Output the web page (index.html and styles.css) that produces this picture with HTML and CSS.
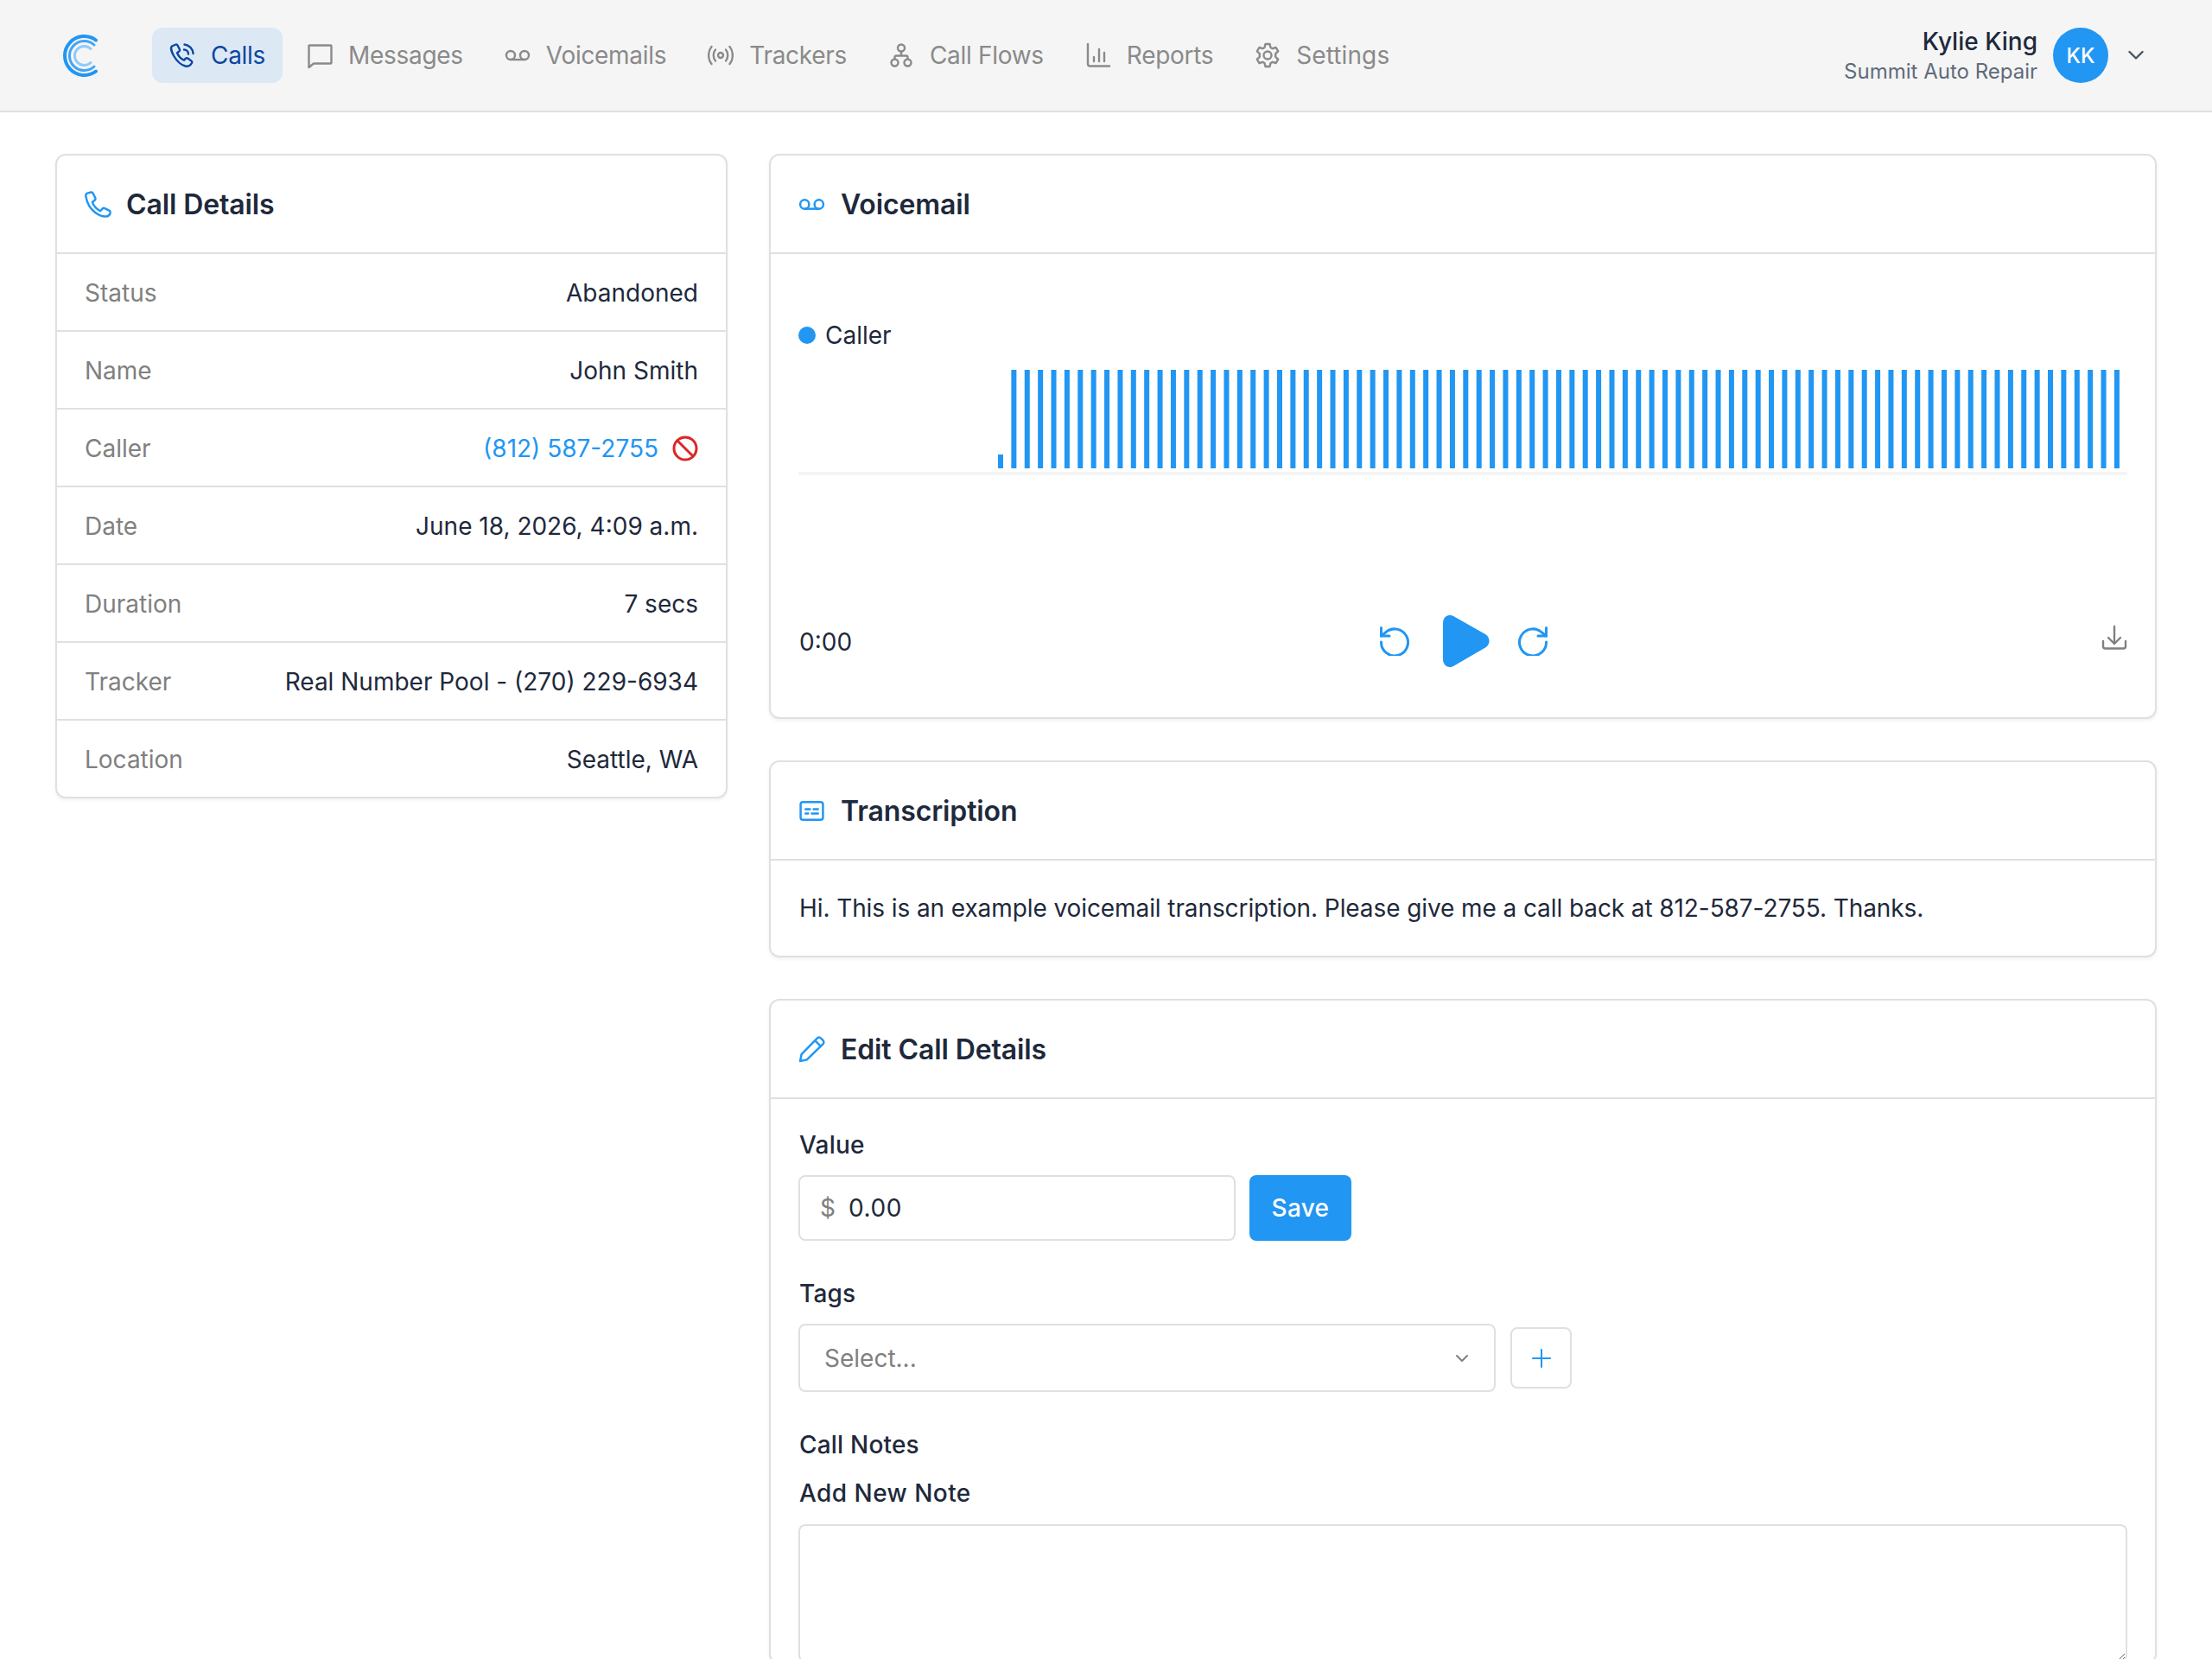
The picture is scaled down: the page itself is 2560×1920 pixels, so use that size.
FILE: index.html
```html
<!DOCTYPE html>
<html lang="en">
<head>
    <meta charset="UTF-8">
    <meta name="viewport" content="width=device-width, initial-scale=1.0">
    <title>Call Details</title>

    <link rel="stylesheet" href="styles.css">
</head>
<body>
    <header class="topbar">
        <svg class="logo" viewBox="0 0 40 49" fill="none" stroke-linecap="round">
            <path d="M38 6.500A22.500 22.500 0 1 0 38 42.500" stroke="#2196f3" stroke-width="4"/>
            <path d="M36 12A17 17 0 1 0 36 37" stroke="#42a5f5" stroke-width="3"/>
            <path d="M32 16.500A11 11 0 1 0 32 32.500" stroke="#90caf9" stroke-width="3"/>
        </svg>
        <nav class="nav">
            <a class="nav__item nav__item--active">
                <svg class="nav__icon" viewBox="0 0 30 30" fill="none" stroke="currentColor" stroke-width="2.4" stroke-linecap="round" stroke-linejoin="round">
                    <path d="M7.500 2.500 3 4.500C1.500 5.500 2 10 5 15.500c3.500 6 8 10.500 13.500 12 3 .8 6-1 7.500-3.500.5-1 .2-2-.6-2.600l-4-2.800c-1-.6-2-.5-2.800.3l-1.600 1.800c-3.500-1.500-6.500-5-8-8.500l2.200-1.700c.8-.7 1-1.700.5-2.700L9.500 3.500c-.5-1-1.200-1.300-2-1z"/>
                    <path d="M17 8.500a5 5 0 0 1 5 5"/>
                    <path d="M17.500 2.500a11 11 0 0 1 10 10.500"/>
                </svg>
                <span>Calls</span>
            </a>
            <a class="nav__item">
                <svg class="nav__icon" viewBox="0 0 30 30" fill="none" stroke="currentColor" stroke-width="2.4" stroke-linejoin="round">
                    <path d="M3 3.500h24.500c.5 0 1 .5 1 1v19c0 .5-.5 1-1 1H8l-5.500 4.500V4c0-.3.2-.5.5-.5z"/>
                </svg>
                <span>Messages</span>
            </a>
            <a class="nav__item">
                <svg class="nav__icon" viewBox="0 0 30 30" fill="none" stroke="currentColor" stroke-width="2.4">
                    <circle cx="7" cy="15" r="5"/>
                    <circle cx="23" cy="15" r="5"/>
                    <path d="M7 20h16"/>
                </svg>
                <span>Voicemails</span>
            </a>
            <a class="nav__item">
                <svg class="nav__icon" viewBox="0 0 30 30" fill="none" stroke="currentColor" stroke-width="2.4" stroke-linecap="round">
                    <circle cx="15" cy="15" r="3"/>
                    <path d="M9 8.500c-3 3.500-3 9.500 0 13"/>
                    <path d="M21 8.500c3 3.500 3 9.500 0 13"/>
                    <path d="M4.500 5c-4.500 5.500-4.500 14.500 0 20"/>
                    <path d="M25.500 5c4.500 5.500 4.500 14.500 0 20"/>
                </svg>
                <span>Trackers</span>
            </a>
            <a class="nav__item">
                <svg class="nav__icon" viewBox="0 0 30 30" fill="none" stroke="currentColor" stroke-width="2.4">
                    <circle cx="15" cy="6.500" r="4"/>
                    <circle cx="7.500" cy="23.500" r="4"/>
                    <circle cx="22.500" cy="23.500" r="4"/>
                    <path d="M15 10.500v5M7.500 19.500v-2c0-1 .8-2 2-2h11c1.200 0 2 1 2 2v2"/>
                </svg>
                <span>Call Flows</span>
            </a>
            <a class="nav__item">
                <svg class="nav__icon" viewBox="0 0 30 30" fill="none" stroke="currentColor" stroke-width="2.4" stroke-linecap="round">
                    <path d="M3 2v23c0 1.500.8 2.500 2.500 2.500H28"/>
                    <path d="M10 17v5M16 8v14M22 12v10"/>
                </svg>
                <span>Reports</span>
            </a>
            <a class="nav__item">
                <svg class="nav__icon" viewBox="0 0 30 30" fill="none" stroke="currentColor" stroke-width="2.4" stroke-linejoin="round">
                    <circle cx="15" cy="15" r="4.500"/>
                    <path d="M12.500 2h5l1 4 2.200 1.200 4-1.200 2.500 4.300-3 2.900v3.600l3 2.900-2.500 4.300-4-1.200-2.200 1.200-1 4h-5l-1-4-2.200-1.200-4 1.200-2.500-4.300 3-2.900v-3.600l-3-2.900L5.300 6l4 1.200 2.200-1.200z"/>
                </svg>
                <span class="nav__text--wide">Settings</span>
            </a>
        </nav>
        <div class="account">
            <div class="account__text">
                <div class="account__name">Kylie King</div>
                <div class="account__org">Summit Auto Repair</div>
            </div>
            <div class="avatar">KK</div>
            <svg class="account__chevron" viewBox="0 0 18 12" fill="none" stroke="currentColor" stroke-width="2.4" stroke-linecap="round" stroke-linejoin="round">
                <path d="M1.500 2 9 9.500 16.500 2"/>
            </svg>
        </div>
    </header>

    <main class="page">
        <section class="card card--details">
            <div class="card__header">
                <svg class="card__icon" viewBox="0 0 30 30" fill="none" stroke="currentColor" stroke-width="2.4" stroke-linejoin="round">
                    <path d="M7 1.500 3 2.500C1.500 3 1 4.500 1.500 7c1.500 7.500 5 13 10 17 4 3 9 5 13 4.500 2-.3 3.500-1.500 4-3.500.3-1.500 0-2.500-1-3l-5-2.500c-1-.5-2-.3-2.700.5l-2.300 2.500c-4-2-7.500-6-9-10l2.700-2c.8-.7 1-1.700.7-2.700L9.500 3C9 1.800 8.200 1.200 7 1.500z"/>
                </svg>
                <h2>Call Details</h2>
            </div>
            <div class="row"><span class="row__label">Status</span><span>Abandoned</span></div>
            <div class="row"><span class="row__label">Name</span><span>John Smith</span></div>
            <div class="row">
                <span class="row__label">Caller</span>
                <span class="row__caller">
                    <a class="link">(812) 587-2755</a>
                    <svg class="block-icon" viewBox="0 0 30 30" fill="none" stroke="#dc2626" stroke-width="3">
                        <circle cx="15" cy="15" r="13"/>
                        <path d="M6 6l18 18"/>
                    </svg>
                </span>
            </div>
            <div class="row"><span class="row__label">Date</span><span>June 18, 2026, 4:09 a.m.</span></div>
            <div class="row"><span class="row__label">Duration</span><span>7 secs</span></div>
            <div class="row"><span class="row__label">Tracker</span><span>Real Number Pool - (270) 229-6934</span></div>
            <div class="row"><span class="row__label">Location</span><span>Seattle, WA</span></div>
        </section>

        <div class="stack">
            <section class="card">
                <div class="card__header">
                    <svg class="card__icon" viewBox="0 0 30 30" fill="none" stroke="currentColor" stroke-width="2.4">
                        <circle cx="7" cy="15" r="5"/>
                        <circle cx="23" cy="15" r="5"/>
                        <path d="M7 20h16"/>
                    </svg>
                    <h2>Voicemail</h2>
                </div>
                <div class="player">
                    <div class="legend"><i class="legend__dot"></i>Caller</div>
                    <svg class="wave" id="wave" width="1538" height="126" viewBox="0 0 1538 126"></svg>
                    <div class="player__controls">
                        <span class="player__time">0:00</span>
                        <div class="player__buttons">
                            <svg class="skip" viewBox="0 0 34 34" fill="none" stroke="currentColor" stroke-width="3" stroke-linecap="round" stroke-linejoin="round">
                                <path d="M1.500 18a15.500 15.500 0 1 0 5-11L1.500 11"/>
                                <path d="M1.500 1.500V11H11"/>
                            </svg>
                            <svg class="play" viewBox="0 0 54 60" fill="currentColor">
                                <path d="M0 9C0 2 6-2 12 1l37 21c6 3.500 6 12 0 15.500L12 59C6 62 0 58 0 51z"/>
                            </svg>
                            <svg class="skip" viewBox="0 0 34 34" fill="none" stroke="currentColor" stroke-width="3" stroke-linecap="round" stroke-linejoin="round">
                                <path d="M32.500 18a15.500 15.500 0 1 1-5-11L32.500 11"/>
                                <path d="M32.500 1.500V11H23"/>
                            </svg>
                        </div>
                        <svg class="download" viewBox="0 0 30 30" fill="none" stroke="currentColor" stroke-width="2.4" stroke-linecap="round" stroke-linejoin="round">
                            <path d="M15 2v20M8 15l7 7 7-7"/>
                            <path d="M2 19v6c0 1.500 1 2.500 2.500 2.500h21c1.500 0 2.500-1 2.500-2.500v-6"/>
                        </svg>
                    </div>
                </div>
            </section>

            <section class="card">
                <div class="card__header">
                    <svg class="card__icon" viewBox="0 0 30 30" fill="none" stroke="currentColor" stroke-width="2.4" stroke-linecap="round">
                        <rect x="2.500" y="5" width="25" height="20" rx="2.500"/>
                        <path d="M8 13h5M17 13h5M8 18h3M15 18h7"/>
                    </svg>
                    <h2>Transcription</h2>
                </div>
                <p class="transcript">Hi. This is an example voicemail transcription. Please give me a call back at 812-587-2755. Thanks.</p>
            </section>

            <section class="card">
                <div class="card__header">
                    <svg class="card__icon" viewBox="0 0 30 30" fill="none" stroke="currentColor" stroke-width="2.4" stroke-linejoin="round">
                        <path d="M2 28l1.500-7.500L21 2.500c1.200-1.200 3-1.200 4.200 0l2.300 2.300c1.200 1.200 1.200 3 0 4.200L9.500 26.500z"/>
                        <path d="M18.500 5l6.500 6.500"/>
                    </svg>
                    <h2>Edit Call Details</h2>
                </div>
                <form class="edit">
                    <label class="edit__label">Value</label>
                    <div class="edit__value">
                        <div class="money"><span class="money__sign">$</span><input class="money__input" type="text" value="0.00"></div>
                        <button class="btn" type="button">Save</button>
                    </div>
                    <label class="edit__label">Tags</label>
                    <div class="edit__tags">
                        <div class="select">
                            <span>Select...</span>
                            <svg class="select__chevron" viewBox="0 0 16 10" fill="none" stroke="currentColor" stroke-width="2" stroke-linecap="round" stroke-linejoin="round">
                                <path d="M2 2l6 6 6-6"/>
                            </svg>
                        </div>
                        <button class="btn-add" type="button">
                            <svg viewBox="0 0 22 22" fill="none" stroke="currentColor" stroke-width="2" stroke-linecap="round">
                                <path d="M11 1v20M1 11h20"/>
                            </svg>
                        </button>
                    </div>
                    <div class="edit__label edit__label--notes">Call Notes</div>
                    <label class="edit__label edit__label--new">Add New Note</label>
                    <textarea class="edit__note"></textarea>
                </form>
            </section>
        </div>
    </main>

    <script src="wave.js"></script>
</body>
</html>
```

FILE: styles.css
```css
* {
    margin: 0;
    padding: 0;
    box-sizing: border-box;
}

html, body {
    height: 1920px;
    overflow: hidden;
}

body {
    background-color: #fff;
    color: #1e293b;
    font-family: 'Inter', sans-serif;
    font-size: 28px;
}

.topbar {
    display: flex;
    align-items: center;
    height: 130px;
    padding: 0 64px 0 73px;
    background-color: #f5f5f5;
    border-bottom: 2px solid #e0e0e0;
}

.logo {
    width: 40px;
    height: 49px;
    margin-right: 63px;
}

.nav {
    display: flex;
    gap: 8px;
    letter-spacing: -0.3px;
}

.nav__item {
    display: flex;
    align-items: center;
    gap: 18px;
    height: 64px;
    padding: 0 20px;
    border-radius: 12px;
    color: #8a8a8a;
}

.nav__item--active {
    background-color: #dce9f5;
    color: #0d47a1;
}

.nav__icon {
    width: 30px;
    height: 30px;
}

.nav__text--wide {
    letter-spacing: 0.1px;
}

.account {
    display: flex;
    align-items: center;
    margin-left: auto;
}

.account__text {
    padding-top: 2px;
    text-align: right;
    margin-right: 18px;
}

.account__name {
    font-size: 28px;
    font-weight: 500;
    line-height: 36px;
}

.account__org {
    color: #5f6b7a;
    font-size: 24px;
    line-height: 34px;
}

.avatar {
    display: flex;
    align-items: center;
    justify-content: center;
    width: 64px;
    height: 64px;
    border-radius: 50%;
    background-color: #2196f3;
    color: #fff;
    font-size: 24px;
    font-weight: 500;
}

.account__chevron {
    width: 18px;
    height: 12px;
    margin: 0 15px 0 23px;
    color: #4b5563;
}

.page {
    display: grid;
    grid-template-columns: 778px 1fr;
    gap: 48px;
    align-items: start;
    padding: 48px 64px 0;
}

.stack {
    display: flex;
    flex-direction: column;
    gap: 48px;
}

.card {
    background-color: #fff;
    border: 2px solid #e0e0e0;
    border-radius: 12px;
    box-shadow: 0 2px 4px rgba(0, 0, 0, 0.06);
}

.card__header {
    display: flex;
    align-items: center;
    gap: 18px;
    height: 114px;
    padding: 0 32px;
    border-bottom: 2px solid #e0e0e0;
}

.card--details .card__header {
    gap: 17px;
}

.card__header h2 {
    font-size: 32px;
    font-weight: 600;
    letter-spacing: -0.12px;
}

.card__icon {
    width: 31px;
    height: 31px;
    color: #2196f3;
}

.row {
    display: flex;
    align-items: center;
    justify-content: space-between;
    height: 90px;
    padding: 1px 32px 0;
    border-bottom: 2px solid #e0e0e0;
}

.row:last-child {
    height: 88px;
    border-bottom: none;
}

.row__label {
    color: #808080;
}

.row__caller {
    display: flex;
    align-items: center;
    gap: 16px;
}

.link {
    color: #2196f3;
}

.block-icon {
    width: 30px;
    height: 30px;
}

.player {
    height: 536px;
    padding: 76px 32px 0;
}

.legend {
    display: flex;
    align-items: center;
    gap: 11px;
    height: 36px;
}

.legend__dot {
    width: 20px;
    height: 20px;
    border-radius: 50%;
    background-color: #2196f3;
}

.wave {
    display: block;
    margin-top: 22px;
}

.player__controls {
    display: grid;
    grid-template-columns: 1fr auto 1fr;
    align-items: center;
    height: 60px;
    margin-top: 158px;
}

.player__time {
    padding: 2px 0 0 1px;
}

.player__buttons {
    display: flex;
    align-items: center;
    gap: 33px;
    margin-left: 2px;
    color: #2196f3;
}

.skip {
    width: 34px;
    height: 34px;
}

.play {
    width: 54px;
    height: 60px;
    margin-left: 6px;
}

.download {
    justify-self: end;
    width: 30px;
    height: 30px;
    margin-bottom: 8px;
    color: #808080;
}

.transcript {
    padding: 32px 32px 32px 33px;
    line-height: 46px;
    letter-spacing: -0.09px;
}

.edit {
    display: flex;
    flex-direction: column;
    padding: 35px 32px 0;
}

.edit__label {
    padding-left: 1px;
    font-weight: 500;
    line-height: 36px;
    letter-spacing: 0.2px;
    margin-bottom: 17px;
}

.edit__value {
    display: flex;
    gap: 16px;
    margin-bottom: 43px;
}

.money {
    display: flex;
    align-items: center;
    width: 506px;
    height: 76px;
    padding: 0 23px;
    border: 2px solid #e0e0e0;
    border-radius: 8px;
}

.money__sign {
    color: #808080;
    margin-right: 15px;
}

.money__input {
    flex: 1;
    min-width: 0;
    border: none;
    outline: none;
    color: inherit;
    font: inherit;
    letter-spacing: 0.6px;
}

.btn {
    width: 118px;
    height: 76px;
    border: none;
    border-radius: 8px;
    background-color: #2196f3;
    color: #fff;
    font: inherit;
    font-weight: 500;
    letter-spacing: 0.3px;
}

.edit__tags {
    display: flex;
    align-items: center;
    gap: 17px;
    margin-bottom: 43px;
}

.select {
    display: flex;
    align-items: center;
    justify-content: space-between;
    width: 807px;
    height: 79px;
    padding: 0 29px 0 28px;
    border: 2px solid #e0e0e0;
    border-radius: 8px;
    color: #808080;
}

.select__chevron {
    width: 16px;
    height: 10px;
}

.btn-add {
    display: flex;
    align-items: center;
    justify-content: center;
    width: 71px;
    height: 71px;
    border: 2px solid #e0e0e0;
    border-radius: 8px;
    background-color: #fff;
    color: #2196f3;
}

.btn-add svg {
    width: 22px;
    height: 22px;
}

.edit__label--notes {
    margin-bottom: 20px;
}

.edit__label--new {
    margin-bottom: 18px;
    letter-spacing: 0.45px;
}

.edit__note {
    width: 100%;
    height: 160px;
    border: 2px solid #e0e0e0;
    border-radius: 8px;
}
```

FILE: wave.js
```js
// 85 bars of the voicemail waveform, first one is the short lead-in
const wave = document.getElementById('wave');
const SVG_NS = 'http://www.w3.org/2000/svg';

for (let i = 0; i < 85; i++) {
    const bar = document.createElementNS(SVG_NS, 'rect');
    const height = i === 0 ? 16 : 114;
    bar.setAttribute('x', (231 + i * 15.38).toFixed(2));
    bar.setAttribute('y', 114 - height);
    bar.setAttribute('width', 6);
    bar.setAttribute('height', height);
    bar.setAttribute('fill', '#2196f3');
    wave.appendChild(bar);
}

const line = document.createElementNS(SVG_NS, 'rect');
line.setAttribute('y', 118);
line.setAttribute('width', 1538);
line.setAttribute('height', 4);
line.setAttribute('fill', '#f5f5f5');
wave.appendChild(line);
```
